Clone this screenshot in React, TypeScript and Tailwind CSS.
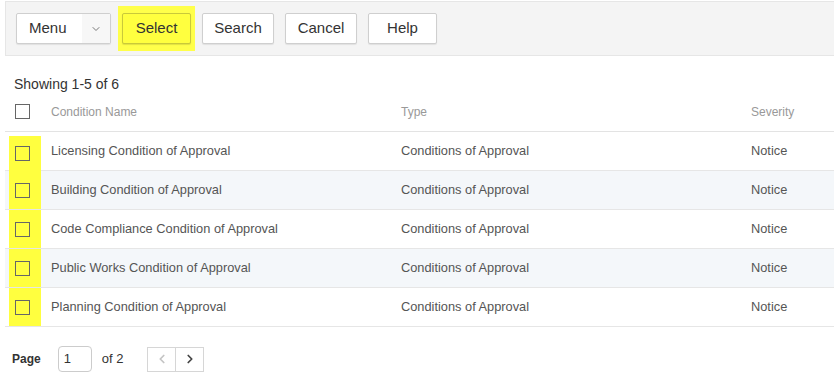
import { ChevronDown, ChevronLeft, ChevronRight } from "lucide-react";

const rows = [
  "Licensing Condition of Approval",
  "Building Condition of Approval",
  "Code Compliance Condition of Approval",
  "Public Works Condition of Approval",
  "Planning Condition of Approval",
];

function Box() {
  return <span className="block size-[15px] border border-[#666] bg-transparent" />;
}

function ToolButton({ label, width }: { label: string; width: string }) {
  return (
    <button
      type="button"
      className={`h-[31px] ${width} rounded-[2px] border border-[#cfcfcf] bg-white text-[15px] text-[#333] shadow-[0_1px_1px_rgba(0,0,0,0.08)]`}
    >
      {label}
    </button>
  );
}

export default function App() {
  return (
    <div className="w-[834px] h-[385px] bg-white pl-[5px] pt-px font-['Liberation_Sans',Arial,sans-serif]">
      <div className="flex h-[55px] items-center gap-[11px] border border-r-0 border-[#e6e6e6] bg-[#f4f4f4] pl-[10px]">
        <div className="flex h-[31px] w-[95px] rounded-[2px] border border-[#cfcfcf] bg-white text-[15px] text-[#333] shadow-[0_1px_1px_rgba(0,0,0,0.08)]">
          <span className="flex w-[65px] items-center pl-[12px]">Menu</span>
          <span className="flex flex-1 items-center justify-center bg-[#f7f7f7]">
            <ChevronDown className="size-3 text-[#777]" strokeWidth={2} />
          </span>
        </div>
        <span className="-mx-[4px] bg-[#ffff4a] px-[4px] py-[7px]">
          <button
            type="button"
            className="block h-[31px] w-[69px] rounded-[2px] border border-[#c9c93a] bg-[#ffff3f] text-[15px] text-[#333] shadow-[0_1px_1px_rgba(0,0,0,0.12)]"
          >
            Select
          </button>
        </span>
        <ToolButton label="Search" width="w-[72px]" />
        <ToolButton label="Cancel" width="w-[72px]" />
        <ToolButton label="Help" width="w-[69px]" />
      </div>

      <p className="mt-[18px] pl-[9px] text-[14px] leading-[20px] text-[#333]">Showing 1-5 of 6</p>

      <div className="-mt-[2px] text-[#555]">
        <div className="flex h-[40px] items-center border-b border-[#e3e3e3] text-[12px] text-[#999]">
          <div className="w-[36px] pl-[10px]">
            <Box />
          </div>
          <div className="w-[350px] pl-[10px]">Condition Name</div>
          <div className="w-[350px] pl-[10px]">Type</div>
          <div className="flex-1 pl-[10px]">Severity</div>
        </div>
        {rows.map((name, i) => (
          <div
            key={name}
            className={`flex h-[39px] items-stretch border-b border-[#e6e6e6] text-[12.8px] ${
              i % 2 === 1 ? "bg-[#f4f7fa]" : "bg-white"
            }`}
          >
            <div className="w-[36px] pl-[4px]">
              <div
                className={`flex h-full w-[32px] items-center bg-[#ffff3f] pl-[6px] ${
                  i === 0 ? "mt-[4px] h-[calc(100%-4px)]" : ""
                } ${i === rows.length - 1 ? "-mb-px h-[calc(100%+1px)]" : ""}`}
              >
                <span className={i === 0 ? "-mt-[4px]" : ""}>
                  <Box />
                </span>
              </div>
            </div>
            <div className="flex w-[350px] items-center pl-[10px]">{name}</div>
            <div className="flex w-[350px] items-center pl-[10px]">Conditions of Approval</div>
            <div className="flex flex-1 items-center pl-[10px]">Notice</div>
          </div>
        ))}
      </div>

      <div className="mt-[19px] flex items-center pl-[7px]">
        <span className="text-[12px] font-bold text-[#333]">Page</span>
        <span className="ml-[17px] flex h-[26px] w-[34px] items-center rounded-[4px] border border-[#ccc] pl-[5px] text-[13px] text-[#333]">
          1
        </span>
        <span className="ml-[10px] text-[13px] text-[#333]">of 2</span>
        <div className="ml-[24px] flex">
          <button
            type="button"
            className="flex h-[25px] w-[29px] items-center justify-center border border-[#d6d6d6] bg-white text-[#c4c4c4]"
          >
            <ChevronLeft className="size-[14px]" strokeWidth={3} />
          </button>
          <button
            type="button"
            className="-ml-px flex h-[25px] w-[29px] items-center justify-center border border-[#d6d6d6] bg-white text-[#444]"
          >
            <ChevronRight className="size-[14px]" strokeWidth={3} />
          </button>
        </div>
      </div>
    </div>
  );
}
